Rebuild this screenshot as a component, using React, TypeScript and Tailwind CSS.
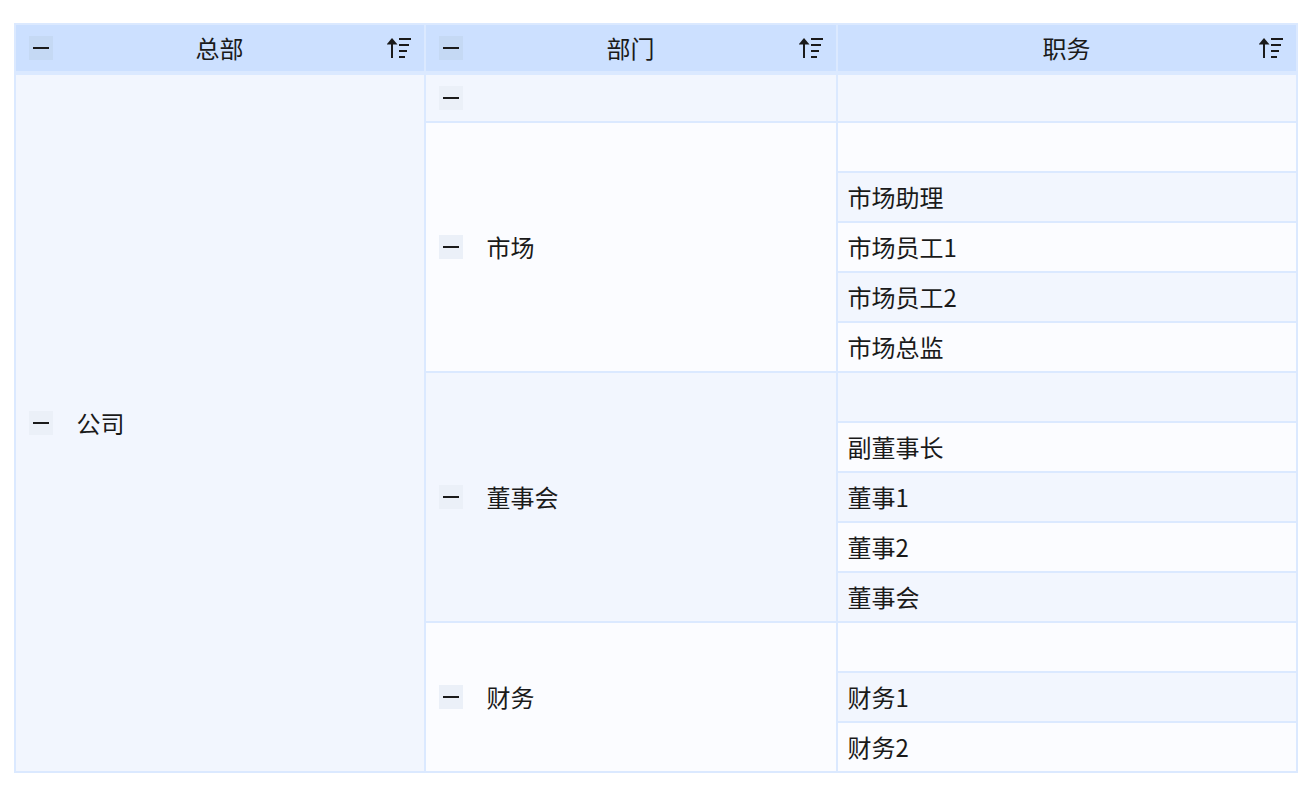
const font = { fontFamily: '"Noto Sans CJK SC", "Liberation Sans", sans-serif' };

function Minus({ dark }: { dark?: boolean }) {
  return (
    <span
      className={`flex h-6 w-6 shrink-0 items-center justify-center ${dark ? "bg-[#c5d9f4]" : "bg-[#ebf0f8]"}`}
    >
      <span className="h-0.5 w-4 bg-[#1a1a1a]" />
    </span>
  );
}

function SortIcon() {
  return (
    <svg width="24" height="22" viewBox="0 0 24 22" className="shrink-0" fill="none">
      <path d="M5 21V3" stroke="#1a1a1a" strokeWidth="2" />
      <path d="M5 1L10.5 7.5H-.5Z" fill="#1a1a1a" />
      <path d="M12 2h12M12 8h10M12 14h8M12 20h6" stroke="#1a1a1a" strokeWidth="2" />
    </svg>
  );
}

function HeaderCell({ label, minus, className }: { label: string; minus?: boolean; className: string }) {
  return (
    <div className={`relative flex h-[46px] items-center justify-center bg-[#cce0ff] ${className}`}>
      {minus && (
        <span className="absolute left-[13px] top-[11px]">
          <Minus dark />
        </span>
      )}
      <span className="-translate-x-[0.5px]">{label}</span>
      <span className="absolute right-[13px] top-[12px]">
        <SortIcon />
      </span>
    </div>
  );
}

const groups = [
  { name: "市场", tone: "bg-[#fbfcff]", rows: ["", "市场助理", "市场员工1", "市场员工2", "市场总监"] },
  { name: "董事会", tone: "bg-[#f2f6fe]", rows: ["", "副董事长", "董事1", "董事2", "董事会"] },
  { name: "财务", tone: "bg-[#fbfcff]", rows: ["", "财务1", "财务2"] },
];

let rowIndex = 0;

export default function App() {
  rowIndex = 0;
  return (
    <div className="min-h-[806px] bg-white pl-[14px] pr-2 pt-[23px] text-2xl text-[#1a1a1a]" style={font}>
      <div className="w-[1284px] border-2 border-[#dbe9ff]">
        <div className="flex border-b-4 border-[#dbe9ff]">
          <HeaderCell label="总部" minus className="w-[408px]" />
          <div className="w-0.5 bg-[#dbe9ff]" />
          <HeaderCell label="部门" minus className="w-[410px]" />
          <div className="w-0.5 bg-[#dbe9ff]" />
          <HeaderCell label="职务" className="w-[458px]" />
        </div>
        <div className="flex">
          <div className="flex w-[408px] items-center gap-[23.5px] bg-[#f2f6fe] pl-[13px]">
            <Minus />
            <span>公司</span>
          </div>
          <div className="w-0.5 bg-[#dbe9ff]" />
          <div className="flex w-[870px] flex-col">
            <div className="flex h-[48px] border-b-2 border-[#dbe9ff] bg-[#f2f6fe]">
              <div className="flex w-[410px] items-center pl-[13px]">
                <Minus />
              </div>
              <div className="w-0.5 bg-[#dbe9ff]" />
            </div>
            {groups.map((g, gi) => (
              <div key={g.name} className={`flex ${gi < groups.length - 1 ? "border-b-2 border-[#dbe9ff]" : ""}`}>
                <div className={`flex w-[410px] items-center gap-[23.5px] pl-[13px] ${g.tone}`}>
                  <Minus />
                  <span>{g.name}</span>
                </div>
                <div className="w-0.5 bg-[#dbe9ff]" />
                <div className="w-[458px]">
                  {g.rows.map((r, i) => {
                    rowIndex += 1;
                    const last = i === g.rows.length - 1;
                    return (
                      <div
                        key={i}
                        className={`flex items-center pl-[9.5px] ${last ? "h-[48px]" : "h-[50px] border-b-2 border-[#dbe9ff]"} ${rowIndex % 2 === 1 ? "bg-[#fbfcff]" : "bg-[#f2f6fe]"}`}
                      >
                        {r}
                      </div>
                    );
                  })}
                </div>
              </div>
            ))}
          </div>
        </div>
      </div>
    </div>
  );
}
